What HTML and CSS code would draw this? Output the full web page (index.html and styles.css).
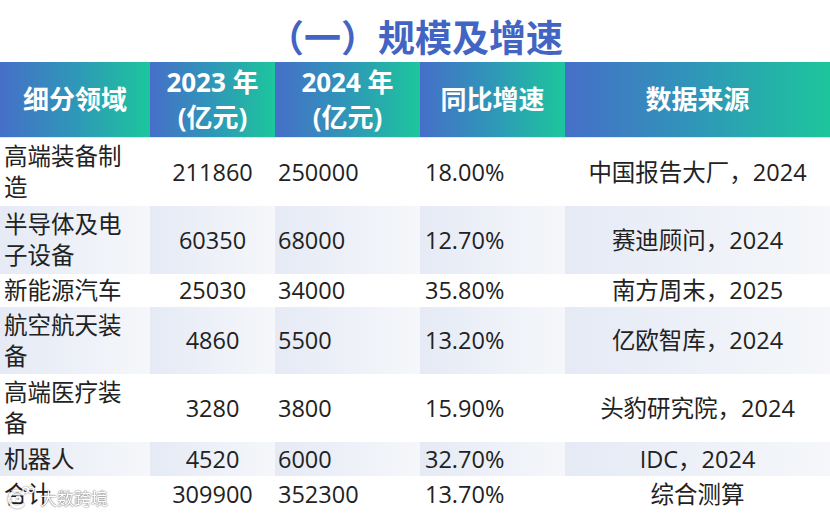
FILE: index.html
```html
<!DOCTYPE html>
<html lang="zh-CN">
<head>
<meta charset="utf-8">
<title>规模及增速</title>
<link rel="stylesheet" href="styles.css">
</head>
<body>
<div class="page">
  <h1 class="title">（一）规模及增速</h1>
  <table class="data">
    <colgroup>
      <col class="c1"><col class="c2"><col class="c3"><col class="c4"><col class="c5">
    </colgroup>
    <thead>
      <tr>
        <th>细分领域</th>
        <th>2023 年<br>(亿元)</th>
        <th>2024 年<br>(亿元)</th>
        <th>同比增速</th>
        <th>数据来源</th>
      </tr>
    </thead>
    <tbody>
      <tr class="r-tall">
        <td class="name">高端装备制造</td><td class="ctr">211860</td><td class="lft">250000</td><td class="pct">18.00%</td><td class="ctr">中国报告大厂，2024</td>
      </tr>
      <tr class="r-tall shade">
        <td class="name">半导体及电子设备</td><td class="ctr">60350</td><td class="lft">68000</td><td class="pct">12.70%</td><td class="ctr">赛迪顾问，2024</td>
      </tr>
      <tr class="r-short">
        <td class="name">新能源汽车</td><td class="ctr">25030</td><td class="lft">34000</td><td class="pct">35.80%</td><td class="ctr">南方周末，2025</td>
      </tr>
      <tr class="r-tall2 shade">
        <td class="name">航空航天装备</td><td class="ctr">4860</td><td class="lft">5500</td><td class="pct">13.20%</td><td class="ctr">亿欧智库，2024</td>
      </tr>
      <tr class="r-tall">
        <td class="name">高端医疗装备</td><td class="ctr">3280</td><td class="lft">3800</td><td class="pct">15.90%</td><td class="ctr">头豹研究院，2024</td>
      </tr>
      <tr class="r-short2 shade">
        <td class="name">机器人</td><td class="ctr">4520</td><td class="lft">6000</td><td class="pct">32.70%</td><td class="ctr">IDC，2024</td>
      </tr>
      <tr class="r-total">
        <td class="name">合计</td><td class="ctr">309900</td><td class="lft">352300</td><td class="pct">13.70%</td><td class="ctr">综合测算</td>
      </tr>
    </tbody>
  </table>
  <div class="watermark">
    <svg class="wm-logo" width="30" height="26" viewBox="0 0 30 26">
      <path d="M17 8.5 A8 8 0 1 0 17 19.5" fill="none" stroke="#fff" stroke-width="3" stroke-linecap="round"/>
      <path d="M11 12 Q14 10.5 14.5 14 Q14 17 11 16" fill="none" stroke="#fff" stroke-width="2.2" stroke-linecap="round"/>
      <circle cx="19.5" cy="5" r="2.6" fill="none" stroke="#fff" stroke-width="1.3"/>
      <circle cx="25" cy="5" r="2.6" fill="none" stroke="#fff" stroke-width="1.3"/>
    </svg>
    <span class="wm-text">大数跨境</span>
  </div>
</div>
</body>
</html>
```
FILE: styles.css
```css
html, body {
  margin: 0;
  padding: 0;
  background: #ffffff;
}
.page {
  position: relative;
  width: 830px;
  height: 518px;
  overflow: hidden;
  font-family: "Open Sans", "Noto Sans CJK SC", sans-serif;
}
.title {
  margin: 0;
  height: 62px;
  box-sizing: border-box;
  padding-top: 11px;
  line-height: 51px;
  text-align: center;
  font-family: "Noto Sans CJK SC", sans-serif;
  font-size: 37px;
  font-weight: 700;
  color: #4265c3;
  letter-spacing: 0;
}
.data {
  width: 830px;
  border-collapse: collapse;
  table-layout: fixed;
}
.c1 { width: 150px; }
.c2 { width: 125px; }
.c3 { width: 145px; }
.c4 { width: 145px; }
.c5 { width: 265px; }
.data th {
  height: 75px;
  padding: 0;
  color: #ffffff;
  font-family: "Open Sans", "Noto Sans CJK SC", sans-serif;
  font-size: 26px;
  font-weight: 700;
  line-height: 35px;
  text-align: center;
  vertical-align: middle;
  background: linear-gradient(90deg, #466fc8 0%, #2f97b8 50%, #1cc69c 100%);
  border-bottom: 1px solid #cdeee6;
}
.data td {
  padding: 0;
  font-size: 23.5px;
  line-height: 31px;
  color: #222222;
  vertical-align: middle;
}
.shade td {
  background: linear-gradient(90deg, #e5eaf5 0%, #eef1f8 55%, #f5f7fa 100%);
}
.r-tall td { height: 68px; }
.r-tall2 td { height: 67px; }
.r-short td { height: 33px; }
.r-short2 td { height: 34px; }
.r-total td { height: 36px; }
.name {
  text-align: left;
  padding-left: 4px !important;
  padding-right: 8px !important;
}
.ctr { text-align: center; }
.lft { text-align: left; padding-left: 3px !important; }
.pct { text-align: left; padding-left: 5px !important; }
.watermark {
  position: absolute;
  left: 6px;
  top: 485px;
  display: flex;
  align-items: center;
  gap: 4px;
  opacity: 0.9;
}
.wm-logo {
  filter: drop-shadow(0 0 1px rgba(0,0,0,0.55));
}
.wm-text {
  font-family: "Noto Sans CJK SC", sans-serif;
  font-size: 17px;
  line-height: 24px;
  color: #ffffff;
  text-shadow: 0 0 2px rgba(0,0,0,0.6), 0 0 1px rgba(0,0,0,0.6);
}
```
